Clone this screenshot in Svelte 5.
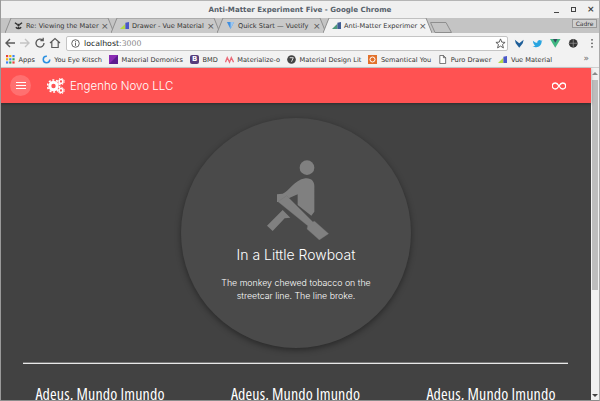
<script>
	const tabs = [
		{ title: 'Re: Viewing the Mater', icon: 'hazard' },
		{ title: 'Drawer - Vue Material', icon: 'vm' },
		{ title: 'Quick Start — Vuetify', icon: 'vuetify' },
		{ title: 'Anti-Matter Experimer', icon: 'vm2', active: true }
	];

	const bookmarks = [
		{ label: 'Apps', kind: 'apps' },
		{ label: 'You Eye Kitsch', kind: 'ring' },
		{ label: 'Material Demonics', kind: 'purple' },
		{ label: 'BMD', kind: 'boot' },
		{ label: 'Materialize-o', kind: 'mat' },
		{ label: 'Material Design Lit', kind: 'mdl' },
		{ label: 'Semantical You', kind: 'sem' },
		{ label: 'Puro Drawer', kind: 'doc' },
		{ label: 'Vue Material', kind: 'vm' }
	];

	const columns = ['Adeus, Mundo Imundo', 'Adeus, Mundo Imundo', 'Adeus, Mundo Imundo'];
</script>

<div class="window">
	<div class="titlebar">
		<span class="title">Anti-Matter Experiment Five - Google Chrome</span>
		<div class="winbtns">
			<span class="wb min"></span>
			<span class="wb max"></span>
			<span class="wb close">×</span>
		</div>
	</div>

	<div class="tabstrip">
		{#each tabs as tab}
			<div class="tab" class:active={tab.active}>
				<svg class="tabshape" viewBox="0 0 109 15" preserveAspectRatio="none">
					<path d="M0 15 L6 0 H103 L109 15" fill={tab.active ? '#f2f2f2' : '#c9c9c9'} stroke="#8e8e8e" stroke-width="1" />
				</svg>
				{#if tab.icon === 'hazard'}
					<svg class="fav" viewBox="0 0 10 10"><circle cx="5" cy="4.500" r="1.400" fill="#333" /><path d="M1 2 L4 4 M9 2 L6 4 M5 6 V9 M2 7 Q5 10 8 7" fill="none" stroke="#333" stroke-width="1.500" /></svg>
				{:else if tab.icon === 'vuetify'}
					<svg class="fav" viewBox="0 0 10 10"><path d="M1 1 H9 L5 9 Z" fill="#3f8ee0" /><path d="M5 1 H9 L5 9 Z" fill="#9cc6ef" /></svg>
				{:else}
					<svg class="fav" viewBox="0 0 10 10"><path d="M0 9 L6 3 V9 Z" fill={tab.icon === 'vm' ? '#b4d94a' : '#4d9a7c'} /><path d="M6 9 V2 L10 1 V9 Z" fill={tab.icon === 'vm' ? '#4a58c8' : '#3f5c94'} /></svg>
				{/if}
				<span class="tabtitle">{tab.title}</span>
				<span class="tabx">×</span>
			</div>
		{/each}
		<svg class="newtab" viewBox="0 0 22 11"><path d="M0.5 0.5 H16 L21.5 10.5 H5 Z" fill="#c4c4c4" stroke="#8e8e8e" /></svg>
		<span class="incog">Cadre</span>
	</div>

	<div class="toolbar">
		<svg class="tool" viewBox="0 0 12 12"><path d="M11 6 H2 M6 2 L2 6 L6 10" fill="none" stroke="#5a5a5a" stroke-width="1.400" /></svg>
		<svg class="tool" viewBox="0 0 12 12"><path d="M1 6 H10 M6 2 L10 6 L6 10" fill="none" stroke="#c4c4c4" stroke-width="1.400" /></svg>
		<svg class="tool" viewBox="0 0 12 12"><path d="M10 6 A4 4 0 1 1 8.800 3.200 M9.200 0.800 V3.600 H6.400" fill="none" stroke="#5a5a5a" stroke-width="1.300" /></svg>
		<svg class="tool" viewBox="0 0 12 12"><path d="M1 6 L6 1.500 L11 6 M2.800 5 V10.500 H9.200 V5" fill="none" stroke="#5a5a5a" stroke-width="1.200" /></svg>
		<div class="omnibox">
			<svg class="info" viewBox="0 0 10 10"><circle cx="5" cy="5" r="4.200" fill="none" stroke="#555" /><path d="M5 4 V7.600 M5 2.400 V3.300" stroke="#555" /></svg>
			<span class="host">localhost</span><span class="port">:3000</span>
			<svg class="star" viewBox="0 0 12 12"><path d="M6 1 L7.400 4.500 L11 4.800 L8.200 7.100 L9.200 10.800 L6 8.800 L2.800 10.800 L3.800 7.100 L1 4.800 L4.600 4.500 Z" fill="none" stroke="#555" /></svg>
		</div>
		<div class="exts">
			<svg viewBox="0 0 12 12"><path d="M1 2 L6 6 L11 2 L10 6 L6 11 L2 6 Z" fill="#1f5f99" /></svg>
			<svg viewBox="0 0 12 12"><path d="M1 3 C3 5 5 5.500 6 5.500 C6 3 8.500 1.500 10.500 3 L12 2.500 L11 4 C11 8 8 11 4 10.500 C3 10.500 1.500 10 0.500 9.500 C2 9.500 3 9 3.800 8.500 C2.500 8 1 5.500 1 3 Z" fill="#2aa5e0" /></svg>
			<svg viewBox="0 0 12 12"><path d="M0 1 H12 L6 11 Z" fill="#41b883" /><path d="M3.500 1 H8.500 L6 5.500 Z" fill="#35495e" /></svg>
			<svg viewBox="0 0 12 12"><circle cx="6" cy="6" r="5" fill="#333" /><path d="M1 6 H11 M6 1 V11" stroke="#999" stroke-width="0.800" /></svg>
			<svg class="dots" viewBox="0 0 4 12"><circle cx="2" cy="2" r="1" fill="#555" /><circle cx="2" cy="6" r="1" fill="#555" /><circle cx="2" cy="10" r="1" fill="#555" /></svg>
		</div>
	</div>

	<div class="bookmarks">
		{#each bookmarks as b}
			<span class="bm">
				{#if b.kind === 'apps'}
					<svg class="bmi" viewBox="0 0 9 9">
						{#each [0, 3.2, 6.4] as y, i}
							{#each [0, 3.2, 6.4] as x, j}
								<rect {x} {y} width="2.200" height="2.200" fill={['#e8453c', '#f4b400', '#3f85f4', '#34a853'][(i + j) % 4]} />
							{/each}
						{/each}
					</svg>
				{:else if b.kind === 'ring'}
					<svg class="bmi" viewBox="0 0 10 10"><circle cx="5" cy="5" r="3.600" fill="none" stroke="#2a8fe0" stroke-width="1.700" stroke-dasharray="17 5" /></svg>
				{:else if b.kind === 'purple'}
					<svg class="bmi" viewBox="0 0 10 10"><rect width="10" height="10" fill="#8a2cb4" /><path d="M10 0 V10 H0 Z" fill="#5e1c90" /></svg>
				{:else if b.kind === 'boot'}
					<span class="bmi boot">B</span>
				{:else if b.kind === 'mat'}
					<svg class="bmi" viewBox="0 0 10 10"><path d="M0.500 8 L2.500 3 L5 8 L7 3 L9.500 8" fill="none" stroke="#ea6a78" stroke-width="1.500" /></svg>
				{:else if b.kind === 'mdl'}
					<svg class="bmi" viewBox="0 0 10 10"><circle cx="5" cy="5" r="4.800" fill="#444" /><path d="M3 3 H7 L5 7.500" fill="none" stroke="#ddd" stroke-width="1.100" /></svg>
				{:else if b.kind === 'sem'}
					<svg class="bmi" viewBox="0 0 10 10"><rect width="10" height="10" fill="#e2712c" /><circle cx="5" cy="5" r="2.800" fill="none" stroke="#fff" stroke-width="1.100" /></svg>
				{:else if b.kind === 'doc'}
					<svg class="bmi" viewBox="0 0 10 10"><path d="M2 0.500 H6 L8.500 3 V9.500 H2 Z M6 0.500 V3 H8.500" fill="#fff" stroke="#444" stroke-width="0.800" /></svg>
				{:else}
					<svg class="bmi" viewBox="0 0 10 10"><path d="M0 9 L6 3 V9 Z" fill="#b4d94a" /><path d="M6 9 V2 L10 1 V9 Z" fill="#4a58c8" /></svg>
				{/if}
				{b.label}
			</span>
		{/each}
		<span class="more">»</span>
	</div>

	<div class="viewport">
		<div class="page">
			<header class="appbar">
				<button class="menubtn" aria-label="menu">
					<span></span><span></span><span></span>
				</button>
				<svg class="gears" viewBox="0 0 18 16">
					<circle cx="6.500" cy="8" r="3.700" fill="none" stroke="#fff" stroke-width="3" />
					<circle cx="6.500" cy="8" r="6" fill="none" stroke="#fff" stroke-width="1.600" stroke-dasharray="2 1.770" />
					<circle cx="14" cy="3.500" r="1.900" fill="none" stroke="#fff" stroke-width="1.500" />
					<circle cx="14" cy="3.500" r="3.300" fill="none" stroke="#fff" stroke-width="1" stroke-dasharray="1.300 1.300" />
					<circle cx="14" cy="12.500" r="1.900" fill="none" stroke="#fff" stroke-width="1.500" />
					<circle cx="14" cy="12.500" r="3.300" fill="none" stroke="#fff" stroke-width="1" stroke-dasharray="1.300 1.300" />
				</svg>
				<span class="brand">Engenho Novo LLC</span>
				<svg class="infinity" viewBox="0 0 14 8"><path d="M7 4 C5.500 1.500 4.500 1 3.300 1 A3 3 0 0 0 3.300 7 C4.500 7 5.500 6.500 7 4 C8.500 1.500 9.500 1 10.700 1 A3 3 0 0 1 10.700 7 C9.500 7 8.500 6.500 7 4 Z" fill="none" stroke="#fff" stroke-width="1.300" /></svg>
			</header>

			<main class="content">
				<section class="disc">
					<svg class="rower" viewBox="0 0 210 255">
						<circle cx="135" cy="38" r="22" fill="#808080" />
						<path d="M45 118 L62 116 C80 112 95 75 130 70 C148 68 157 80 157 92 V170 L148 182 L107 150 V118 L80 130 L62 141 H45 Z" fill="#808080" />
						<path d="M48 140 L74 122 L152 200 L158 199 L200 236 L172 255 L135 222 L137 212 Z" fill="#808080" stroke="#6c6c6c" stroke-width="1" />
						<path d="M15 212 L62 165 L85 188 L68 190 L32 228 Z" fill="#808080" />
					</svg>
					<h1>In a Little Rowboat</h1>
					<p>The monkey chewed tobacco on the streetcar line. The line broke.</p>
				</section>

				<hr />

				<div class="cols">
					{#each columns as c}
						<h2>{c}</h2>
					{/each}
				</div>
			</main>
		</div>
		<div class="scrollbar">
			<span class="arrow"></span>
			<span class="thumb"></span>
			<span class="arrow down"></span>
		</div>
	</div>
</div>

<style>
	:global(body) {
		margin: 0;
		overflow: hidden;
		background: #424242;
	}

	.window {
		width: 600px;
		height: 401px;
		display: flex;
		flex-direction: column;
		overflow: hidden;
		font-family: 'DejaVu Sans', sans-serif;
		box-sizing: border-box;
		border-left: 1px solid #9a9a9a;
		border-right: 1px solid #aaa;
		border-bottom: 1px solid #8c8c8c;
	}

	.titlebar {
		height: 18px;
		flex: none;
		background: #f0f0f0;
		border-top: 1px solid #b5b5b5;
		box-sizing: border-box;
		position: relative;
		display: flex;
		align-items: center;
		justify-content: center;
	}

	.title {
		font-size: 7.100px;
		font-weight: 700;
		color: #56606a;
	}

	.winbtns {
		position: absolute;
		right: 5px;
		top: 5px;
		display: flex;
		gap: 10px;
		align-items: center;
	}

	.wb {
		width: 7px;
		height: 7px;
		display: block;
		position: relative;
		font-size: 9px;
		line-height: 7px;
		font-weight: 700;
		color: #444;
		text-align: center;
	}

	.wb.min::after {
		content: '';
		position: absolute;
		left: 1px;
		right: 1px;
		bottom: 0;
		height: 1px;
		background: #444;
	}

	.wb.max::after {
		content: '';
		position: absolute;
		left: 1px;
		top: 1px;
		width: 3px;
		height: 3px;
		border: 1px solid #444;
	}

	.tabstrip {
		height: 15px;
		flex: none;
		background: #c4c4c4;
		display: flex;
		align-items: stretch;
		padding-left: 4px;
		position: relative;
	}

	.tab {
		width: 109px;
		margin-right: -3px;
		position: relative;
		display: flex;
		align-items: center;
		gap: 3px;
		padding: 0 7px 0 9px;
		box-sizing: border-box;
		flex: none;
	}

	.tab.active {
		z-index: 1;
	}

	.tabshape {
		position: absolute;
		inset: 0;
		width: 100%;
		height: 100%;
	}

	.fav {
		width: 9px;
		height: 9px;
		flex: none;
		position: relative;
	}

	.tabtitle {
		position: relative;
		flex: 1;
		font-size: 6.600px;
		color: #333;
		white-space: nowrap;
		min-width: 0;
	}

	.tabx {
		position: relative;
		width: 6px;
		flex: none;
		font-size: 9px;
		line-height: 10px;
		color: #555;
		text-align: center;
	}

	.newtab {
		width: 22px;
		height: 11px;
		align-self: flex-end;
		margin-left: 1px;
		flex: none;
	}

	.incog {
		position: absolute;
		right: 2px;
		top: 1px;
		width: 25px;
		height: 9px;
		box-sizing: border-box;
		border: 1px solid #999;
		font-size: 6px;
		line-height: 7px;
		text-align: center;
		color: #333;
		background: #d0d0d0;
	}

	.toolbar {
		height: 20px;
		flex: none;
		background: #f2f2f2;
		display: flex;
		align-items: center;
		padding-left: 3px;
		gap: 3px;
	}

	.tool {
		width: 12px;
		height: 12px;
		flex: none;
	}

	.omnibox {
		width: 442px;
		height: 15px;
		margin-left: 2px;
		box-sizing: border-box;
		background: #fff;
		border: 1px solid #c4c4c4;
		border-radius: 2px;
		display: flex;
		align-items: center;
		font-size: 7.800px;
		padding: 0 1px 0 4px;
		flex: none;
	}

	.info {
		width: 9px;
		height: 9px;
		margin-right: 4px;
	}

	.host {
		color: #222;
	}

	.port {
		color: #888;
	}

	.star {
		width: 11px;
		height: 11px;
		margin-left: auto;
	}

	.exts {
		display: flex;
		align-items: center;
		gap: 7.500px;
		margin-left: 3px;
	}

	.exts svg {
		width: 10.500px;
		height: 10.500px;
	}

	.exts .dots {
		width: 4px;
		margin-left: 4px;
	}

	.bookmarks {
		height: 15px;
		flex: none;
		background: #f2f2f2;
		display: flex;
		align-items: center;
		padding: 0 0 1px 5px;
		gap: 7px;
		font-size: 6.600px;
		color: #333;
		border-bottom: 1px solid #cfcfcf;
		position: relative;
		box-sizing: border-box;
	}

	.bm {
		display: flex;
		align-items: center;
		gap: 3.500px;
		white-space: nowrap;
	}

	.bmi {
		width: 9px;
		height: 9px;
		flex: none;
	}

	.boot {
		background: #563d7c;
		color: #fff;
		font-size: 7px;
		line-height: 9px;
		font-weight: 700;
		text-align: center;
		border-radius: 2px;
	}

	.more {
		position: absolute;
		right: 10px;
		top: 0;
		color: #666;
		font-size: 9px;
	}

	.viewport {
		flex: 1;
		min-height: 0;
		display: flex;
	}

	.page {
		flex: 1;
		min-width: 0;
	}

	.appbar {
		height: 35px;
		background: #ff5252;
		display: flex;
		align-items: center;
		padding-left: 9px;
		color: #fff;
		box-shadow: 0 1px 3px rgba(0, 0, 0, 0.35);
		position: relative;
	}

	.menubtn {
		width: 21px;
		height: 21px;
		border-radius: 50%;
		border: 0;
		padding: 0;
		background: #ff7070;
		display: flex;
		flex-direction: column;
		justify-content: center;
		align-items: center;
		gap: 2px;
	}

	.menubtn span {
		width: 10px;
		height: 1px;
		background: #fff;
	}

	.gears {
		width: 18px;
		height: 16px;
		margin-left: 16px;
	}

	.brand {
		font-family: Inter, sans-serif;
		font-weight: 300;
		font-size: 11.500px;
		margin-left: 5px;
		color: #fff;
	}

	.infinity {
		width: 14px;
		height: 8px;
		margin-left: auto;
		margin-right: 25px;
	}

	.content {
		background: #424242;
		padding-top: 15px;
		height: 298px;
		box-sizing: border-box;
		overflow: hidden;
	}

	.disc {
		width: 230px;
		height: 230px;
		margin: 0 auto;
		border-radius: 50%;
		background: #4a4a4a;
		box-shadow: 0 2px 6px rgba(0, 0, 0, 0.4);
		display: flex;
		flex-direction: column;
		align-items: center;
	}

	.rower {
		width: 70px;
		height: 85px;
		margin: 37px 0 0 2px;
	}

	h1 {
		font-family: Inter, sans-serif;
		font-weight: 300;
		font-size: 14px;
		line-height: 18px;
		color: #fff;
		margin: 6px 0 0;
	}

	p {
		font-family: Inter, sans-serif;
		font-weight: 300;
		font-size: 8.800px;
		line-height: 13px;
		color: #fff;
		text-align: center;
		margin: 12px 0 0;
		width: 160px;
	}

	hr {
		margin: 14px 23px 0 22px;
		border: 0;
		border-top: 1px solid #777;
		height: 1px;
		background: #e8e8e8;
	}

	.cols {
		display: grid;
		grid-template-columns: repeat(3, 1fr);
		column-gap: 41.500px;
		margin: 20px 23px 0 22px;
	}

	h2 {
		font-family: 'Open Sans', sans-serif;
		font-stretch: 75%;
		font-weight: 400;
		font-size: 16px;
		letter-spacing: 0.15px;
		line-height: 20px;
		color: #fff;
		margin: 0;
		text-align: center;
		white-space: nowrap;
	}

	.scrollbar {
		width: 8px;
		flex: none;
		background: #f1f1f1;
		display: flex;
		flex-direction: column;
		align-items: center;
	}

	.arrow {
		width: 0;
		height: 0;
		margin: 4px 0 5px;
		border-left: 3px solid transparent;
		border-right: 3px solid transparent;
		border-bottom: 3px solid #8a8a8a;
	}

	.arrow.down {
		margin: auto 0 3px;
		border-bottom: 0;
		border-top: 3px solid #444;
	}

	.thumb {
		width: 6px;
		height: 210px;
		background: #bdbdbd;
	}
</style>
